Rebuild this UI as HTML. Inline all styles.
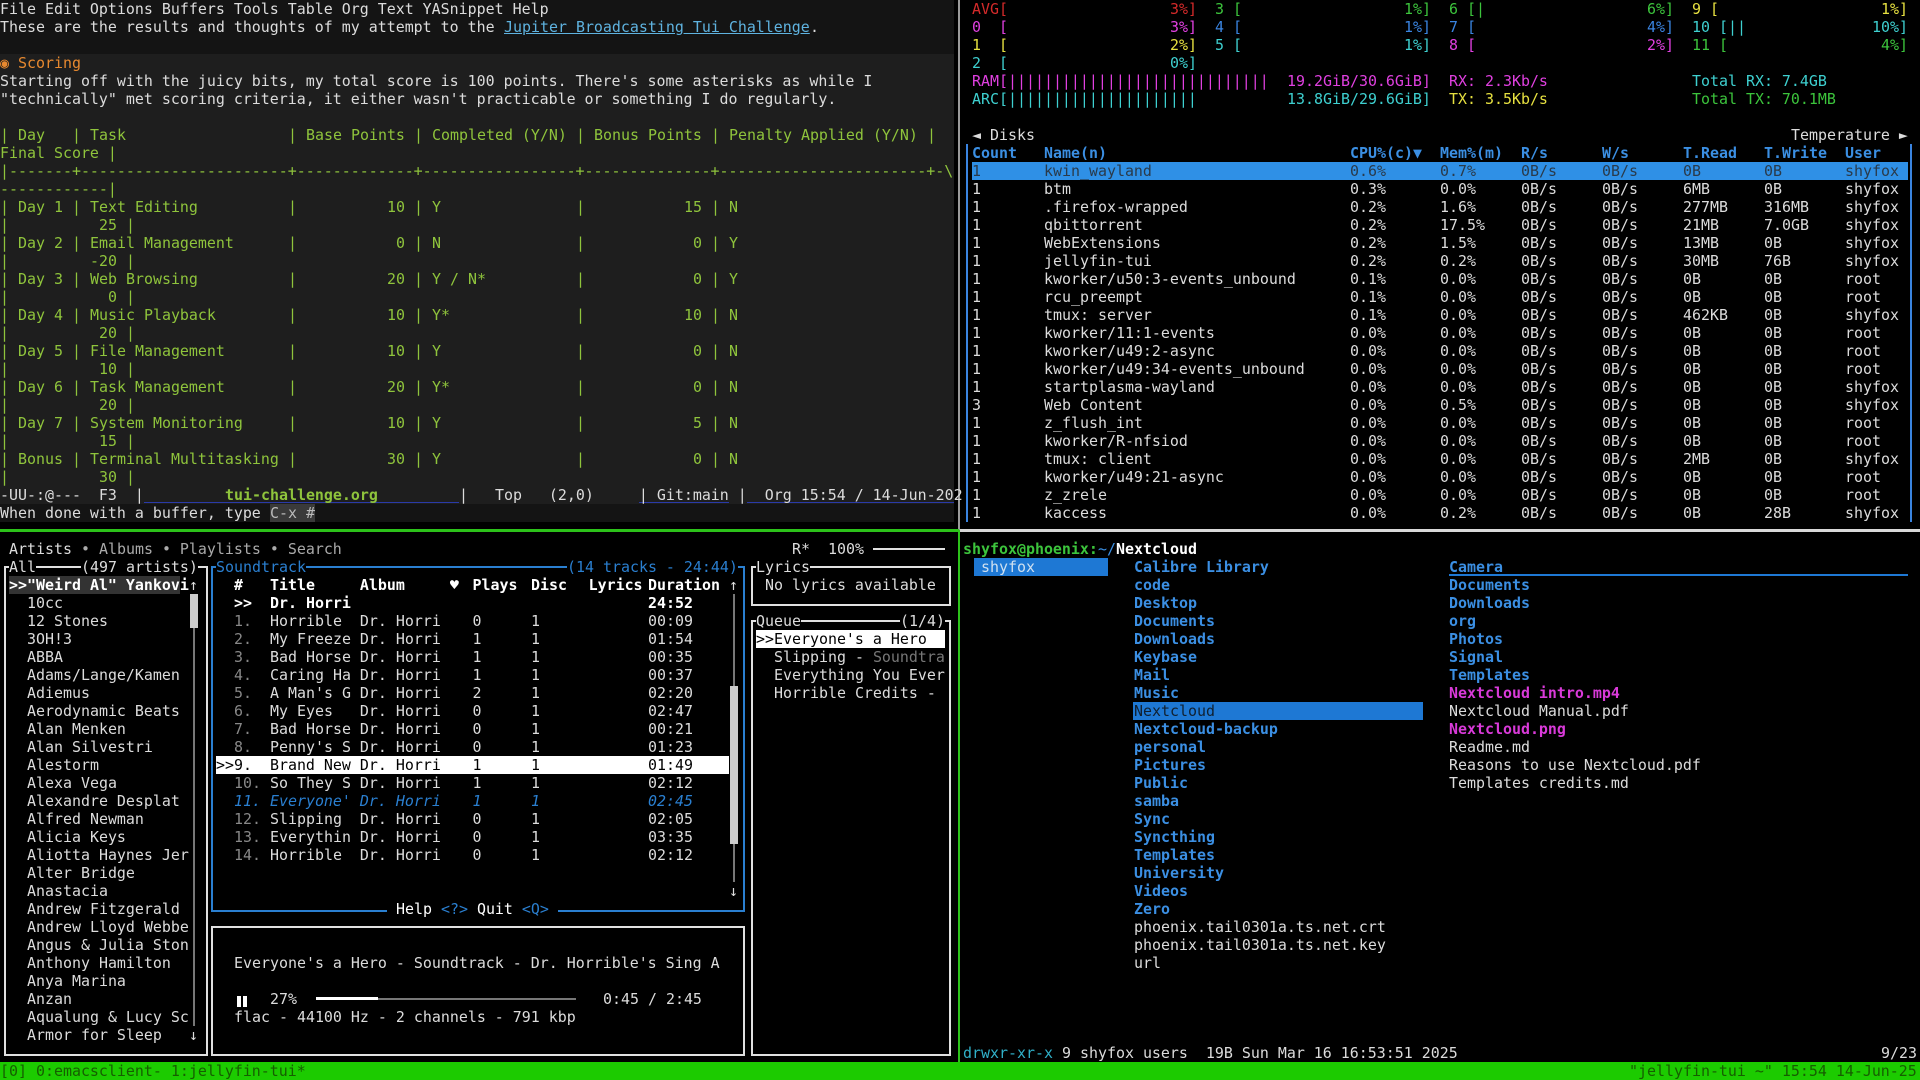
<!DOCTYPE html>
<html><head><meta charset="utf-8"><style>
*{box-sizing:border-box}
body{margin:0;width:1920px;height:1080px;background:#000;overflow:hidden;font:14.95px/18px "DejaVu Sans Mono","Liberation Mono",monospace;color:#dcdcdc;position:relative}
.l{position:absolute;left:0;top:calc(var(--r)*18px);height:18px;width:1920px;white-space:pre}
.l i{position:absolute;font-style:normal;left:calc(var(--c)*9px);top:0;height:18px}
.bx{position:absolute}
.t{color:#8fc43c}
.g{color:#888}
.bl{color:#3b8fe3;font-weight:bold}
.bk{background:#000}
</style></head><body>
<div class="bx" style="left:0;top:0;width:954px;height:54px;background:#141414"></div>
<div class="bx" style="left:0;top:54px;width:954px;height:450px;background:#1e1e1e"></div>
<div class="bx" style="left:0;top:504px;width:954px;height:18px;background:#141414"></div>
<div class="bx" style="left:958px;top:0;width:2px;height:530px;background:#9a9a9a"></div>
<div class="bx" style="left:958px;top:530px;width:2px;height:532px;background:#2cc21a"></div>
<div class="bx" style="left:0;top:529px;width:959px;height:3px;background:#2cc21a"></div>
<div class="bx" style="left:960px;top:529px;width:960px;height:3px;background:#d8d8d8"></div>

<div class="l" style="--r:0"><i style="--c:0">File Edit Options Buffers Tools Table Org Text YASnippet Help</i></div>
<div class="l" style="--r:1"><i style="--c:0">These are the results and thoughts of my attempt to the </i><i style="--c:56;color:#5fb3e0;text-decoration:underline">Jupiter Broadcasting Tui Challenge</i><i style="--c:90">.</i></div>
<div class="l" style="--r:3"><i style="--c:0;color:#e8892f">◉ Scoring</i></div>
<div class="l" style="--r:4"><i style="--c:0">Starting off with the juicy bits, my total score is 100 points. There's some asterisks as while I</i></div>
<div class="l" style="--r:5"><i style="--c:0">"technically" met scoring criteria, it either wasn't practicable or something I do regularly.</i></div>
<div class="l t" style="--r:7"><i style="--c:0">|</i><i style="--c:2">Day</i><i style="--c:8">|</i><i style="--c:10">Task</i><i style="--c:32">|</i><i style="--c:34">Base Points</i><i style="--c:46">|</i><i style="--c:48">Completed (Y/N)</i><i style="--c:64">|</i><i style="--c:66">Bonus Points</i><i style="--c:79">|</i><i style="--c:81">Penalty Applied (Y/N)</i><i style="--c:103">|</i></div>
<div class="l t" style="--r:8"><i style="--c:0">Final Score |</i></div>
<div class="l t" style="--r:9"><i style="--c:0">|-------+-----------------------+-------------+-----------------+--------------+-----------------------+-\</i></div>
<div class="l t" style="--r:10"><i style="--c:0">------------|</i></div>

<div class="l t" style="--r:11"><i style="--c:0">|</i><i style="--c:2">Day 1</i><i style="--c:8">|</i><i style="--c:10">Text Editing</i><i style="--c:32">|</i><i style="--c:43">10</i><i style="--c:46">|</i><i style="--c:48">Y</i><i style="--c:64">|</i><i style="--c:76">15</i><i style="--c:79">|</i><i style="--c:81">N</i></div>
<div class="l t" style="--r:12"><i style="--c:0">|</i><i style="--c:11">25</i><i style="--c:14">|</i></div>
<div class="l t" style="--r:13"><i style="--c:0">|</i><i style="--c:2">Day 2</i><i style="--c:8">|</i><i style="--c:10">Email Management</i><i style="--c:32">|</i><i style="--c:44">0</i><i style="--c:46">|</i><i style="--c:48">N</i><i style="--c:64">|</i><i style="--c:77">0</i><i style="--c:79">|</i><i style="--c:81">Y</i></div>
<div class="l t" style="--r:14"><i style="--c:0">|</i><i style="--c:10">-20</i><i style="--c:14">|</i></div>
<div class="l t" style="--r:15"><i style="--c:0">|</i><i style="--c:2">Day 3</i><i style="--c:8">|</i><i style="--c:10">Web Browsing</i><i style="--c:32">|</i><i style="--c:43">20</i><i style="--c:46">|</i><i style="--c:48">Y / N*</i><i style="--c:64">|</i><i style="--c:77">0</i><i style="--c:79">|</i><i style="--c:81">Y</i></div>
<div class="l t" style="--r:16"><i style="--c:0">|</i><i style="--c:12">0</i><i style="--c:14">|</i></div>
<div class="l t" style="--r:17"><i style="--c:0">|</i><i style="--c:2">Day 4</i><i style="--c:8">|</i><i style="--c:10">Music Playback</i><i style="--c:32">|</i><i style="--c:43">10</i><i style="--c:46">|</i><i style="--c:48">Y*</i><i style="--c:64">|</i><i style="--c:76">10</i><i style="--c:79">|</i><i style="--c:81">N</i></div>
<div class="l t" style="--r:18"><i style="--c:0">|</i><i style="--c:11">20</i><i style="--c:14">|</i></div>
<div class="l t" style="--r:19"><i style="--c:0">|</i><i style="--c:2">Day 5</i><i style="--c:8">|</i><i style="--c:10">File Management</i><i style="--c:32">|</i><i style="--c:43">10</i><i style="--c:46">|</i><i style="--c:48">Y</i><i style="--c:64">|</i><i style="--c:77">0</i><i style="--c:79">|</i><i style="--c:81">N</i></div>
<div class="l t" style="--r:20"><i style="--c:0">|</i><i style="--c:11">10</i><i style="--c:14">|</i></div>
<div class="l t" style="--r:21"><i style="--c:0">|</i><i style="--c:2">Day 6</i><i style="--c:8">|</i><i style="--c:10">Task Management</i><i style="--c:32">|</i><i style="--c:43">20</i><i style="--c:46">|</i><i style="--c:48">Y*</i><i style="--c:64">|</i><i style="--c:77">0</i><i style="--c:79">|</i><i style="--c:81">N</i></div>
<div class="l t" style="--r:22"><i style="--c:0">|</i><i style="--c:11">20</i><i style="--c:14">|</i></div>
<div class="l t" style="--r:23"><i style="--c:0">|</i><i style="--c:2">Day 7</i><i style="--c:8">|</i><i style="--c:10">System Monitoring</i><i style="--c:32">|</i><i style="--c:43">10</i><i style="--c:46">|</i><i style="--c:48">Y</i><i style="--c:64">|</i><i style="--c:77">5</i><i style="--c:79">|</i><i style="--c:81">N</i></div>
<div class="l t" style="--r:24"><i style="--c:0">|</i><i style="--c:11">15</i><i style="--c:14">|</i></div>
<div class="l t" style="--r:25"><i style="--c:0">|</i><i style="--c:2">Bonus</i><i style="--c:8">|</i><i style="--c:10">Terminal Multitasking</i><i style="--c:32">|</i><i style="--c:43">30</i><i style="--c:46">|</i><i style="--c:48">Y</i><i style="--c:64">|</i><i style="--c:77">0</i><i style="--c:79">|</i><i style="--c:81">N</i></div>
<div class="l t" style="--r:26"><i style="--c:0">|</i><i style="--c:11">30</i><i style="--c:14">|</i></div>
<div class="bx" style="left:144px;top:502px;width:315px;height:1px;background:#2a3aa8"></div>
<div class="bx" style="left:639px;top:502px;width:90px;height:1px;background:#2a3aa8"></div>
<div class="bx" style="left:747px;top:502px;width:207px;height:1px;background:#2a3aa8"></div>
<div class="l" style="--r:27"><i style="--c:0">-UU-:@---  F3  |</i><i style="--c:25;color:#8fc43c;font-weight:bold">tui-challenge.org</i><i style="--c:51">|   Top   (2,0)     | Git:main |  Org 15:54 / 14-Jun-202</i></div>
<div class="l" style="--r:28"><i style="--c:0">When done with a buffer, type </i><i style="--c:30;background:#3a3a3a;color:#bbb">C-x #</i></div>

<div class="l" style="--r:0"><i style="--c:108;color:#d42a2a">AVG[</i><i style="--c:130;color:#d42a2a">3%]</i><i style="--c:135;color:#3cc43c">3 [</i><i style="--c:156;color:#3cc43c">1%]</i><i style="--c:161;color:#3cc43c">6 [|</i><i style="--c:183;color:#3cc43c">6%]</i><i style="--c:188;color:#e6e040">9 [</i><i style="--c:209;color:#e6e040">1%]</i></div>
<div class="l" style="--r:1"><i style="--c:108;color:#e040e0">0  [</i><i style="--c:130;color:#e040e0">3%]</i><i style="--c:135;color:#3a84e0">4 [</i><i style="--c:156;color:#3a84e0">1%]</i><i style="--c:161;color:#3a84e0">7 [</i><i style="--c:183;color:#3a84e0">4%]</i><i style="--c:188;color:#3ed0d0">10 [||</i><i style="--c:208;color:#3ed0d0">10%]</i></div>
<div class="l" style="--r:2"><i style="--c:108;color:#e6e040">1  [</i><i style="--c:130;color:#e6e040">2%]</i><i style="--c:135;color:#3ed0d0">5 [</i><i style="--c:156;color:#3ed0d0">1%]</i><i style="--c:161;color:#e040e0">8 [</i><i style="--c:183;color:#e040e0">2%]</i><i style="--c:188;color:#3cc43c">11 [</i><i style="--c:209;color:#3cc43c">4%]</i></div>
<div class="l" style="--r:3"><i style="--c:108;color:#3ed0d0">2  [</i><i style="--c:130;color:#3ed0d0">0%]</i></div>
<div class="l" style="--r:4"><i style="--c:108;color:#e040e0">RAM[|||||||||||||||||||||||||||||</i><i style="--c:143;color:#e040e0">19.2GiB/30.6GiB]</i><i style="--c:161;color:#e040e0">RX: 2.3Kb/s</i><i style="--c:188;color:#3ed0d0">Total RX: 7.4GB</i></div>
<div class="l" style="--r:5"><i style="--c:108;color:#3ed0d0">ARC[|||||||||||||||||||||</i><i style="--c:143;color:#3ed0d0">13.8GiB/29.6GiB]</i><i style="--c:161;color:#e6e040">TX: 3.5Kb/s</i><i style="--c:188;color:#3cc43c">Total TX: 70.1MB</i></div>
<div class="l" style="--r:7"><i style="--c:108">◄ Disks</i><i style="--c:199">Temperature ►</i></div>
<div class="bx" style="left:966px;top:144px;width:2px;height:378px;background:#3a84e0"></div>
<div class="bx" style="left:1910px;top:144px;width:2px;height:378px;background:#3a84e0"></div>
<div class="bx" style="left:972px;top:162px;width:936px;height:18px;background:#2f90e6"></div>
<div class="l bl" style="--r:8"><i style="--c:108">Count</i><i style="--c:116">Name(n)</i><i style="--c:150">CPU%(c)▼</i><i style="--c:160">Mem%(m)</i><i style="--c:169">R/s</i><i style="--c:178">W/s</i><i style="--c:187">T.Read</i><i style="--c:196">T.Write</i><i style="--c:205">User</i></div>
<div class="l" style="--r:9;color:#2a3a4a"><i style="--c:108">1</i><i style="--c:116">kwin_wayland</i><i style="--c:150">0.6%</i><i style="--c:160">0.7%</i><i style="--c:169">0B/s</i><i style="--c:178">0B/s</i><i style="--c:187">0B</i><i style="--c:196">0B</i><i style="--c:205">shyfox</i></div>
<div class="l" style="--r:10"><i style="--c:108">1</i><i style="--c:116">btm</i><i style="--c:150">0.3%</i><i style="--c:160">0.0%</i><i style="--c:169">0B/s</i><i style="--c:178">0B/s</i><i style="--c:187">6MB</i><i style="--c:196">0B</i><i style="--c:205">shyfox</i></div>
<div class="l" style="--r:11"><i style="--c:108">1</i><i style="--c:116">.firefox-wrapped</i><i style="--c:150">0.2%</i><i style="--c:160">1.6%</i><i style="--c:169">0B/s</i><i style="--c:178">0B/s</i><i style="--c:187">277MB</i><i style="--c:196">316MB</i><i style="--c:205">shyfox</i></div>
<div class="l" style="--r:12"><i style="--c:108">1</i><i style="--c:116">qbittorrent</i><i style="--c:150">0.2%</i><i style="--c:160">17.5%</i><i style="--c:169">0B/s</i><i style="--c:178">0B/s</i><i style="--c:187">21MB</i><i style="--c:196">7.0GB</i><i style="--c:205">shyfox</i></div>
<div class="l" style="--r:13"><i style="--c:108">1</i><i style="--c:116">WebExtensions</i><i style="--c:150">0.2%</i><i style="--c:160">1.5%</i><i style="--c:169">0B/s</i><i style="--c:178">0B/s</i><i style="--c:187">13MB</i><i style="--c:196">0B</i><i style="--c:205">shyfox</i></div>
<div class="l" style="--r:14"><i style="--c:108">1</i><i style="--c:116">jellyfin-tui</i><i style="--c:150">0.2%</i><i style="--c:160">0.2%</i><i style="--c:169">0B/s</i><i style="--c:178">0B/s</i><i style="--c:187">30MB</i><i style="--c:196">76B</i><i style="--c:205">shyfox</i></div>
<div class="l" style="--r:15"><i style="--c:108">1</i><i style="--c:116">kworker/u50:3-events_unbound</i><i style="--c:150">0.1%</i><i style="--c:160">0.0%</i><i style="--c:169">0B/s</i><i style="--c:178">0B/s</i><i style="--c:187">0B</i><i style="--c:196">0B</i><i style="--c:205">root</i></div>
<div class="l" style="--r:16"><i style="--c:108">1</i><i style="--c:116">rcu_preempt</i><i style="--c:150">0.1%</i><i style="--c:160">0.0%</i><i style="--c:169">0B/s</i><i style="--c:178">0B/s</i><i style="--c:187">0B</i><i style="--c:196">0B</i><i style="--c:205">root</i></div>
<div class="l" style="--r:17"><i style="--c:108">1</i><i style="--c:116">tmux: server</i><i style="--c:150">0.1%</i><i style="--c:160">0.0%</i><i style="--c:169">0B/s</i><i style="--c:178">0B/s</i><i style="--c:187">462KB</i><i style="--c:196">0B</i><i style="--c:205">shyfox</i></div>
<div class="l" style="--r:18"><i style="--c:108">1</i><i style="--c:116">kworker/11:1-events</i><i style="--c:150">0.0%</i><i style="--c:160">0.0%</i><i style="--c:169">0B/s</i><i style="--c:178">0B/s</i><i style="--c:187">0B</i><i style="--c:196">0B</i><i style="--c:205">root</i></div>
<div class="l" style="--r:19"><i style="--c:108">1</i><i style="--c:116">kworker/u49:2-async</i><i style="--c:150">0.0%</i><i style="--c:160">0.0%</i><i style="--c:169">0B/s</i><i style="--c:178">0B/s</i><i style="--c:187">0B</i><i style="--c:196">0B</i><i style="--c:205">root</i></div>
<div class="l" style="--r:20"><i style="--c:108">1</i><i style="--c:116">kworker/u49:34-events_unbound</i><i style="--c:150">0.0%</i><i style="--c:160">0.0%</i><i style="--c:169">0B/s</i><i style="--c:178">0B/s</i><i style="--c:187">0B</i><i style="--c:196">0B</i><i style="--c:205">root</i></div>
<div class="l" style="--r:21"><i style="--c:108">1</i><i style="--c:116">startplasma-wayland</i><i style="--c:150">0.0%</i><i style="--c:160">0.0%</i><i style="--c:169">0B/s</i><i style="--c:178">0B/s</i><i style="--c:187">0B</i><i style="--c:196">0B</i><i style="--c:205">shyfox</i></div>
<div class="l" style="--r:22"><i style="--c:108">3</i><i style="--c:116">Web Content</i><i style="--c:150">0.0%</i><i style="--c:160">0.5%</i><i style="--c:169">0B/s</i><i style="--c:178">0B/s</i><i style="--c:187">0B</i><i style="--c:196">0B</i><i style="--c:205">shyfox</i></div>
<div class="l" style="--r:23"><i style="--c:108">1</i><i style="--c:116">z_flush_int</i><i style="--c:150">0.0%</i><i style="--c:160">0.0%</i><i style="--c:169">0B/s</i><i style="--c:178">0B/s</i><i style="--c:187">0B</i><i style="--c:196">0B</i><i style="--c:205">root</i></div>
<div class="l" style="--r:24"><i style="--c:108">1</i><i style="--c:116">kworker/R-nfsiod</i><i style="--c:150">0.0%</i><i style="--c:160">0.0%</i><i style="--c:169">0B/s</i><i style="--c:178">0B/s</i><i style="--c:187">0B</i><i style="--c:196">0B</i><i style="--c:205">root</i></div>
<div class="l" style="--r:25"><i style="--c:108">1</i><i style="--c:116">tmux: client</i><i style="--c:150">0.0%</i><i style="--c:160">0.0%</i><i style="--c:169">0B/s</i><i style="--c:178">0B/s</i><i style="--c:187">2MB</i><i style="--c:196">0B</i><i style="--c:205">shyfox</i></div>
<div class="l" style="--r:26"><i style="--c:108">1</i><i style="--c:116">kworker/u49:21-async</i><i style="--c:150">0.0%</i><i style="--c:160">0.0%</i><i style="--c:169">0B/s</i><i style="--c:178">0B/s</i><i style="--c:187">0B</i><i style="--c:196">0B</i><i style="--c:205">root</i></div>
<div class="l" style="--r:27"><i style="--c:108">1</i><i style="--c:116">z_zrele</i><i style="--c:150">0.0%</i><i style="--c:160">0.0%</i><i style="--c:169">0B/s</i><i style="--c:178">0B/s</i><i style="--c:187">0B</i><i style="--c:196">0B</i><i style="--c:205">root</i></div>
<div class="l" style="--r:28"><i style="--c:108">1</i><i style="--c:116">kaccess</i><i style="--c:150">0.0%</i><i style="--c:160">0.2%</i><i style="--c:169">0B/s</i><i style="--c:178">0B/s</i><i style="--c:187">0B</i><i style="--c:196">28B</i><i style="--c:205">shyfox</i></div>

<div class="bx" style="left:4px;top:566px;width:204px;height:490px;border:2px solid #e0e0e0"></div>
<div class="bx" style="left:211px;top:566px;width:534px;height:346px;border:2px solid #2a7fd0"></div>
<div class="bx" style="left:211px;top:926px;width:534px;height:130px;border:2px solid #e0e0e0"></div>
<div class="bx" style="left:751px;top:566px;width:200px;height:40px;border:2px solid #e0e0e0"></div>
<div class="bx" style="left:751px;top:620px;width:200px;height:436px;border:2px solid #e0e0e0"></div>

<div class="l" style="--r:30"><i style="--c:1">Artists</i><i style="--c:9;color:#aaa">• Albums • Playlists • Search</i><i style="--c:88">R*</i><i style="--c:92">100%</i></div>
<div class="bx" style="left:873px;top:548px;width:72px;height:2px;background:#e0e0e0"></div>
<div class="l" style="--r:31"><i class="bk" style="--c:1">All</i><i class="bk" style="--c:9">(497 artists)</i><i class="bk" style="--c:24;color:#2a7fd0">Soundtrack</i><i class="bk" style="--c:63;color:#2a7fd0">(14 tracks - 24:44)</i><i class="bk" style="--c:84">Lyrics</i></div>
<div class="bx" style="left:9px;top:576px;width:171px;height:18px;background:#333"></div>
<div class="l" style="--r:32"><i style="--c:1;font-weight:bold;color:#fff">&gt;&gt;"Weird Al" Yankovi</i><i style="--c:21">↑</i><i style="--c:26;font-weight:bold;color:#fff">#   Title     Album     ♥</i><i style="--c:52.5;font-weight:bold;color:#fff">Plays</i><i style="--c:59;font-weight:bold;color:#fff">Disc</i><i style="--c:65.4;font-weight:bold;color:#fff">Lyrics</i><i style="--c:72;font-weight:bold;color:#fff">Duration</i><i style="--c:81">↑</i><i style="--c:85">No lyrics available</i></div>
<div class="bx" style="left:193px;top:594px;width:2px;height:432px;background:#777"></div>
<div class="bx" style="left:190px;top:594px;width:8px;height:34px;background:#ccc"></div>
<div class="l" style="--r:57"><i style="--c:21">↓</i></div>
<div class="l" style="--r:33"><i style="--c:3">10cc</i><i style="--c:26;font-weight:bold;color:#fff">&gt;&gt;  Dr. Horri</i><i style="--c:72;font-weight:bold;color:#fff">24:52</i></div>
<div class="l" style="--r:34"><i style="--c:3">12 Stones</i><i style="--c:26" class="g">1.</i><i style="--c:30">Horrible  Dr. Horri</i><i style="--c:52.5">0</i><i style="--c:59">1</i><i style="--c:72">00:09</i><i class="bk" style="--c:84">Queue</i><i class="bk" style="--c:100">(1/4)</i></div>
<div class="bx" style="left:756px;top:630px;width:189px;height:18px;background:#fff"></div>
<div class="l" style="--r:35"><i style="--c:3">3OH!3</i><i style="--c:26" class="g">2.</i><i style="--c:30">My Freeze Dr. Horri</i><i style="--c:52.5">1</i><i style="--c:59">1</i><i style="--c:72">01:54</i><i style="--c:84;color:#000">&gt;&gt;Everyone's a Hero</i></div>
<div class="l" style="--r:36"><i style="--c:3">ABBA</i><i style="--c:26" class="g">3.</i><i style="--c:30">Bad Horse Dr. Horri</i><i style="--c:52.5">1</i><i style="--c:59">1</i><i style="--c:72">00:35</i><i style="--c:86">Slipping - <span style="color:#777">Soundtra</span></i></div>
<div class="l" style="--r:37"><i style="--c:3">Adams/Lange/Kamen</i><i style="--c:26" class="g">4.</i><i style="--c:30">Caring Ha Dr. Horri</i><i style="--c:52.5">1</i><i style="--c:59">1</i><i style="--c:72">00:37</i><i style="--c:86">Everything You Ever</i></div>
<div class="l" style="--r:38"><i style="--c:3">Adiemus</i><i style="--c:26" class="g">5.</i><i style="--c:30">A Man's G Dr. Horri</i><i style="--c:52.5">2</i><i style="--c:59">1</i><i style="--c:72">02:20</i><i style="--c:86">Horrible Credits -</i></div>
<div class="l" style="--r:39"><i style="--c:3">Aerodynamic Beats</i><i style="--c:26" class="g">6.</i><i style="--c:30">My Eyes   Dr. Horri</i><i style="--c:52.5">0</i><i style="--c:59">1</i><i style="--c:72">02:47</i></div>
<div class="l" style="--r:40"><i style="--c:3">Alan Menken</i><i style="--c:26" class="g">7.</i><i style="--c:30">Bad Horse Dr. Horri</i><i style="--c:52.5">0</i><i style="--c:59">1</i><i style="--c:72">00:21</i></div>
<div class="l" style="--r:41"><i style="--c:3">Alan Silvestri</i><i style="--c:26" class="g">8.</i><i style="--c:30">Penny's S Dr. Horri</i><i style="--c:52.5">0</i><i style="--c:59">1</i><i style="--c:72">01:23</i></div>
<div class="bx" style="left:216px;top:756px;width:513px;height:18px;background:#fff"></div>
<div class="l" style="--r:42;color:#000"><i style="--c:3;color:#dcdcdc">Alestorm</i><i style="--c:24">&gt;&gt;9.  Brand New Dr. Horri</i><i style="--c:52.5">1</i><i style="--c:59">1</i><i style="--c:72">01:49</i></div>
<div class="l" style="--r:43"><i style="--c:3">Alexa Vega</i><i style="--c:26" class="g">10.</i><i style="--c:30">So They S Dr. Horri</i><i style="--c:52.5">1</i><i style="--c:59">1</i><i style="--c:72">02:12</i></div>
<div class="l" style="--r:44"><i style="--c:3">Alexandre Desplat</i><i style="--c:26;color:#2a7fd0;font-style:italic">11. Everyone' Dr. Horri</i><i style="--c:52.5;color:#2a7fd0;font-style:italic">1</i><i style="--c:59;color:#2a7fd0;font-style:italic">1</i><i style="--c:72;color:#2a7fd0;font-style:italic">02:45</i></div>
<div class="l" style="--r:45"><i style="--c:3">Alfred Newman</i><i style="--c:26" class="g">12.</i><i style="--c:30">Slipping  Dr. Horri</i><i style="--c:52.5">0</i><i style="--c:59">1</i><i style="--c:72">02:05</i></div>
<div class="l" style="--r:46"><i style="--c:3">Alicia Keys</i><i style="--c:26" class="g">13.</i><i style="--c:30">Everythin Dr. Horri</i><i style="--c:52.5">0</i><i style="--c:59">1</i><i style="--c:72">03:35</i></div>
<div class="l" style="--r:47"><i style="--c:3">Aliotta Haynes Jer</i><i style="--c:26" class="g">14.</i><i style="--c:30">Horrible  Dr. Horri</i><i style="--c:52.5">0</i><i style="--c:59">1</i><i style="--c:72">02:12</i></div>
<div class="l" style="--r:48"><i style="--c:3">Alter Bridge</i></div>
<div class="l" style="--r:49"><i style="--c:3">Anastacia</i><i style="--c:81">↓</i></div>
<div class="bx" style="left:733px;top:594px;width:2px;height:288px;background:#777"></div>
<div class="bx" style="left:730px;top:686px;width:8px;height:158px;background:#ccc"></div>
<div class="l" style="--r:50"><i style="--c:3">Andrew Fitzgerald</i><i class="bk" style="--c:43;color:#fff"> Help <span style="color:#2a7fd0">&lt;?&gt;</span> Quit <span style="color:#2a7fd0">&lt;Q&gt;</span> </i></div>
<div class="l" style="--r:51"><i style="--c:3">Andrew Lloyd Webbe</i></div>
<div class="l" style="--r:52"><i style="--c:3">Angus &amp; Julia Ston</i></div>
<div class="l" style="--r:53"><i style="--c:3">Anthony Hamilton</i><i style="--c:26">Everyone's a Hero - Soundtrack - Dr. Horrible's Sing A</i></div>
<div class="l" style="--r:54"><i style="--c:3">Anya Marina</i></div>
<div class="bx" style="left:237px;top:996px;width:4px;height:11px;background:#fff"></div>
<div class="bx" style="left:243px;top:996px;width:4px;height:11px;background:#fff"></div>
<div class="l" style="--r:55"><i style="--c:3">Anzan</i><i style="--c:30">27%</i><i style="--c:67">0:45 / 2:45</i></div>
<div class="bx" style="left:316px;top:998px;width:260px;height:2px;background:#777"></div>
<div class="bx" style="left:316px;top:997px;width:62px;height:3px;background:#fff"></div>
<div class="l" style="--r:56"><i style="--c:3">Aqualung &amp; Lucy Sc</i><i style="--c:26">flac - 44100 Hz - 2 channels - 791 kbp</i></div>
<div class="l" style="--r:57"><i style="--c:3">Armor for Sleep</i></div>

<div class="l" style="--r:30"><i style="--c:107;color:#3cc43c;font-weight:bold">shyfox@phoenix:</i><i style="--c:122;color:#3b8fe3">~/</i><i style="--c:124;color:#fff;font-weight:bold">Nextcloud</i></div>
<div class="bx" style="left:974px;top:558px;width:134px;height:18px;background:#1e78d4"></div>
<div class="bx" style="left:1133px;top:702px;width:290px;height:18px;background:#1e78d4"></div>
<div class="bx" style="left:1449px;top:574px;width:459px;height:2px;background:#1e78d4"></div>
<div class="l" style="--r:31"><i style="--c:109;color:#cfe0f0">shyfox</i><i class="bl" style="--c:126">Calibre Library</i><i class="bl" style="--c:161">Camera</i></div>
<div class="l" style="--r:32"><i class="bl" style="--c:126">code</i><i class="bl" style="--c:161">Documents</i></div>
<div class="l" style="--r:33"><i class="bl" style="--c:126">Desktop</i><i class="bl" style="--c:161">Downloads</i></div>
<div class="l" style="--r:34"><i class="bl" style="--c:126">Documents</i><i class="bl" style="--c:161">org</i></div>
<div class="l" style="--r:35"><i class="bl" style="--c:126">Downloads</i><i class="bl" style="--c:161">Photos</i></div>
<div class="l" style="--r:36"><i class="bl" style="--c:126">Keybase</i><i class="bl" style="--c:161">Signal</i></div>
<div class="l" style="--r:37"><i class="bl" style="--c:126">Mail</i><i class="bl" style="--c:161">Templates</i></div>
<div class="l" style="--r:38"><i class="bl" style="--c:126">Music</i><i style="--c:161;color:#d93ad9;font-weight:bold">Nextcloud intro.mp4</i></div>
<div class="l" style="--r:39"><i style="--c:126;color:#102030">Nextcloud</i><i style="--c:161">Nextcloud Manual.pdf</i></div>
<div class="l" style="--r:40"><i class="bl" style="--c:126">Nextcloud-backup</i><i style="--c:161;color:#d93ad9;font-weight:bold">Nextcloud.png</i></div>
<div class="l" style="--r:41"><i class="bl" style="--c:126">personal</i><i style="--c:161">Readme.md</i></div>
<div class="l" style="--r:42"><i class="bl" style="--c:126">Pictures</i><i style="--c:161">Reasons to use Nextcloud.pdf</i></div>
<div class="l" style="--r:43"><i class="bl" style="--c:126">Public</i><i style="--c:161">Templates credits.md</i></div>
<div class="l" style="--r:44"><i class="bl" style="--c:126">samba</i></div>
<div class="l" style="--r:45"><i class="bl" style="--c:126">Sync</i></div>
<div class="l" style="--r:46"><i class="bl" style="--c:126">Syncthing</i></div>
<div class="l" style="--r:47"><i class="bl" style="--c:126">Templates</i></div>
<div class="l" style="--r:48"><i class="bl" style="--c:126">University</i></div>
<div class="l" style="--r:49"><i class="bl" style="--c:126">Videos</i></div>
<div class="l" style="--r:50"><i class="bl" style="--c:126">Zero</i></div>
<div class="l" style="--r:51"><i style="--c:126">phoenix.tail0301a.ts.net.crt</i></div>
<div class="l" style="--r:52"><i style="--c:126">phoenix.tail0301a.ts.net.key</i></div>
<div class="l" style="--r:53"><i style="--c:126">url</i></div>
<div class="l" style="--r:58"><i style="--c:107;color:#30b0c8">drwxr-xr-x</i><i style="--c:118">9 shyfox users  19B Sun Mar 16 16:53:51 2025</i><i style="--c:209">9/23</i></div>

<div class="bx" style="left:0;top:1062px;width:1920px;height:18px;background:#1ccb00"></div>
<div class="l" style="--r:59;color:#165e00"><i style="--c:0">[0] 0:emacsclient- 1:jellyfin-tui*</i><i style="--c:181">"jellyfin-tui ~" 15:54 14-Jun-25</i></div>
</body></html>
